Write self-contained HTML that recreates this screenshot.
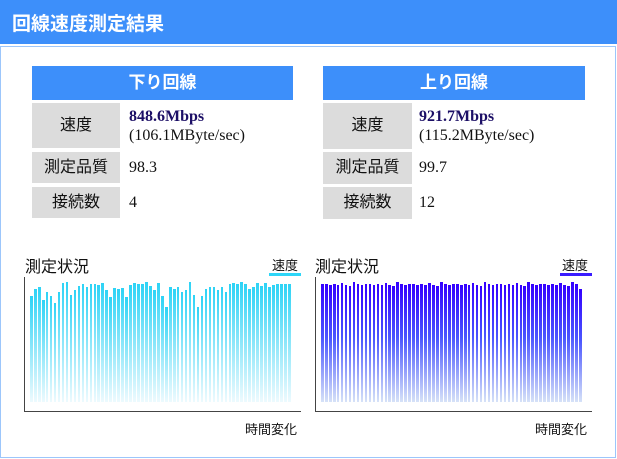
<!DOCTYPE html>
<html><head><meta charset="utf-8">
<style>
*{margin:0;padding:0;box-sizing:border-box}
body{width:617px;height:459px;background:#fff;position:relative;overflow:hidden;font-family:"Liberation Serif","Noto Serif CJK SC","Noto Sans CJK JP",serif;color:#111}
.hdr{position:absolute;left:0;top:0;width:617px;height:44px;background:#3d8ffa;color:#fff;font-size:19px;font-weight:bold;padding:9px 0 0 12px;font-family:"Liberation Sans","Noto Sans CJK JP",sans-serif}
.frame{position:absolute;left:0;top:46px;width:616px;height:412px;border:1.5px solid #9cc6fb}
.th{position:absolute;height:34px;background:#3d8ffa;color:#fff;font-weight:bold;font-size:17px;text-align:center;line-height:34px;font-family:"Liberation Sans","Noto Sans CJK JP",sans-serif}
.lab{position:absolute;background:#dcdcdc;font-size:16px;text-align:center;font-family:"Liberation Sans","Noto Sans CJK JP",sans-serif}
.val{position:absolute;font-size:16px;line-height:19px}
.b{color:#1c0f66;font-weight:bold}
.t{position:absolute;font-size:16px;font-family:"Liberation Sans","Noto Sans CJK JP",sans-serif}
.s{position:absolute;font-size:13px;font-family:"Liberation Sans","Noto Sans CJK JP",sans-serif}
.ax{position:absolute;background:#444}
.bar{position:absolute;width:2.6px}
</style></head><body>
<div class="hdr">回線速度測定結果</div>
<div class="frame"></div>

<div class="th" style="left:32px;top:66px;width:261px">下り回線</div>
<div class="lab" style="left:32px;top:103px;width:88px;height:45px;line-height:45px">速度</div>
<div class="val" style="left:129px;top:107px"><span class="b">848.6Mbps</span><br>(106.1MByte/sec)</div>
<div class="lab" style="left:32px;top:152px;width:88px;height:31px;line-height:31px">測定品質</div>
<div class="val" style="left:129px;top:158px">98.3</div>
<div class="lab" style="left:32px;top:187px;width:88px;height:31px;line-height:31px">接続数</div>
<div class="val" style="left:129px;top:193px">4</div>

<div class="th" style="left:323px;top:66px;width:262px">上り回線</div>
<div class="lab" style="left:323px;top:103px;width:89px;height:46px;line-height:46px">速度</div>
<div class="val" style="left:419px;top:107px"><span class="b">921.7Mbps</span><br>(115.2MByte/sec)</div>
<div class="lab" style="left:323px;top:152px;width:89px;height:32px;line-height:32px">測定品質</div>
<div class="val" style="left:419px;top:158px">99.7</div>
<div class="lab" style="left:323px;top:187px;width:89px;height:32px;line-height:32px">接続数</div>
<div class="val" style="left:419px;top:193px">12</div>

<div class="t" style="left:25px;top:253px">測定状況</div>
<div class="s" style="left:272px;top:255px">速度</div>
<div style="position:absolute;left:269px;top:273px;width:32px;height:3px;background:#2dd6f8"></div>
<div class="ax" style="left:24px;top:277px;width:1px;height:135px"></div>
<div class="ax" style="left:24px;top:411px;width:277px;height:1px"></div>
<div class="s" style="left:245px;top:419px">時間変化</div>

<div class="t" style="left:315px;top:253px">測定状況</div>
<div class="s" style="left:562px;top:255px">速度</div>
<div style="position:absolute;left:560px;top:273px;width:32px;height:3px;background:#3a1cff"></div>
<div class="ax" style="left:315px;top:277px;width:1px;height:135px"></div>
<div class="ax" style="left:315px;top:411px;width:277px;height:1px"></div>
<div class="s" style="left:535px;top:419px">時間変化</div>

<div id="bars"></div>
<script>
var L=[296,289,287,300,292,296,303,292,283,282,295,290,286,284,287,284,284,285,283,290,297,288,289,288,297,285,283,284,284,282,286,290,283,296,307,287,289,287,292,290,282,295,307,296,289,287,287,290,287,292,284,283,284,282,284,289,287,283,286,283,287,285,284,284,284,284];
var R=[];for(var i=0;i<66;i++){R.push([284,284,285,284,285,283,285,286,282,284,285][i%11]);}
R[64]=284;R[65]=289;
var h='';
for(var i=0;i<66;i++){
 var x=30+i*3.97,t=L[i];
 h+='<div class="bar" style="left:'+x+'px;top:'+t+'px;height:'+(402-t)+'px;background:linear-gradient(#2dd3f6,#edfafe)"></div>';
 var x2=321+i*3.97,t2=R[i];
 h+='<div class="bar" style="left:'+x2+'px;top:'+t2+'px;height:'+(402-t2)+'px;background:linear-gradient(#3300ff,#4a55ff 45%,#d6e2f8)"></div>';
}
document.getElementById('bars').innerHTML=h;
</script>
</body></html>
